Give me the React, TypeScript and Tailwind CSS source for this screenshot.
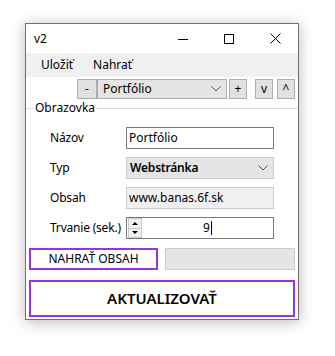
const font = { fontFamily: '"Noto Sans", "Segoe UI", sans-serif' };

const Chevron = () => (
  <svg className="ml-auto" width="10" height="6" viewBox="0 0 10 6" fill="none">
    <path d="M0.5 0.5 L5 5 L9.5 0.5" stroke="#555" strokeWidth="1" />
  </svg>
);

const FieldRow = ({ label, children }: { label: string; children: React.ReactNode }) => (
  <div className="flex h-[22px] items-center">
    <div className="w-[76px] pl-[24px] text-[12px] leading-none tracking-[-0.2px] text-black whitespace-nowrap">{label}</div>
    <div className="ml-[24px] w-[148px]">{children}</div>
  </div>
);

const ToolBtn = ({ children, className = '' }: { children: React.ReactNode; className?: string }) => (
  <button
    type="button"
    className={`flex h-[20px] items-center justify-center border border-[#adadad] bg-[#e1e1e1] text-[12px] leading-none text-black ${className}`}>
    {children}
  </button>
);

export default function App() {
  return (
    <div className="h-[356px] w-[335px] bg-white pl-[25px] pt-[23px]" style={font}>
      <div className="flex h-[297px] w-[274px] flex-col border border-[#707070] bg-white shadow-[0_2px_14px_rgba(0,0,0,0.28)]">
        {/* title bar */}
        <div className="flex h-[29px] items-center">
          <span className="pl-[8px] text-[12px] text-black">v2</span>
          <div className="ml-auto flex h-full">
            <div className="flex w-[46px] items-center justify-center">
              <svg width="10" height="10" viewBox="0 0 10 10">
                <path d="M0 5.5 H10" stroke="#000" strokeWidth="1" />
              </svg>
            </div>
            <div className="flex w-[46px] items-center justify-center">
              <svg width="10" height="10" viewBox="0 0 10 10" fill="none">
                <rect x="0.5" y="0.5" width="9" height="9" stroke="#000" strokeWidth="1" />
              </svg>
            </div>
            <div className="flex w-[46px] items-center justify-center">
              <svg width="11" height="11" viewBox="0 0 11 11" fill="none">
                <path d="M0.5 0.5 L10.5 10.5 M10.5 0.5 L0.5 10.5" stroke="#000" strokeWidth="1" />
              </svg>
            </div>
          </div>
        </div>

        {/* menu */}
        <div className="flex h-[24px] items-center gap-[20px] bg-[#f0f0f0] pl-[15px] text-[12px] text-black">
          <span>Uložiť</span>
          <span>Nahrať</span>
        </div>

        {/* toolbar */}
        <div className="flex h-[23px] items-center pl-[51px]">
          <ToolBtn className="w-[20px]">-</ToolBtn>
          <div className="flex h-[20px] w-[130px] items-center border border-[#adadad] bg-[#e5e5e5] pl-[5px] pr-[5px] text-[12px] text-black">
            <span>Portfólio</span>
            <Chevron />
          </div>
          <ToolBtn className="ml-[2px] w-[18px]">+</ToolBtn>
          <ToolBtn className="ml-[8px] w-[18px] text-[11px]">v</ToolBtn>
          <ToolBtn className="ml-[4px] w-[18px] text-[11px]">^</ToolBtn>
        </div>

        {/* group */}
        <div className="mt-[1px] flex items-center">
          <div className="h-px w-[8px] bg-[#dcdcdc]" />
          <span className="px-px text-[12px] leading-[14px] text-black">Obrazovka</span>
          <div className="h-px flex-1 bg-[#dcdcdc]" />
        </div>

        <div className="mt-[12px] flex flex-col gap-[8px]">
          <FieldRow label="Názov">
            <div className="flex h-[22px] items-center border border-[#7a7a7a] bg-white pl-[2px] text-[12px] text-black">
              Portfólio
            </div>
          </FieldRow>
          <FieldRow label="Typ">
            <div className="flex h-[22px] items-center border border-[#cccccc] bg-[#e5e5e5] pl-[3px] pr-[5px] text-[12px] font-semibold tracking-[-0.2px] text-black">
              <span>Webstránka</span>
              <Chevron />
            </div>
          </FieldRow>
          <FieldRow label="Obsah">
            <div className="flex h-[22px] items-center border border-[#cccccc] bg-[#f0f0f0] pl-[2px] text-[12px] text-black">
              www.banas.6f.sk
            </div>
          </FieldRow>
          <FieldRow label="Trvanie (sek.)">
            <div className="flex h-[22px] items-center border border-[#7a7a7a] bg-white text-[12px] text-black">
              <div className="ml-px flex h-[20px] w-[14px] flex-col border border-[#c8c8c8] bg-[#f0f0f0]">
                <div className="flex flex-1 items-center justify-center border-b border-[#c8c8c8]">
                  <div className="h-0 w-0 border-x-[3px] border-b-[3px] border-x-transparent border-b-black" />
                </div>
                <div className="flex flex-1 items-center justify-center">
                  <div className="h-0 w-0 border-x-[3px] border-t-[3px] border-x-transparent border-t-black" />
                </div>
              </div>
              <div className="flex flex-1 items-center justify-center">
                <span>9</span>
                <span className="ml-px h-[14px] w-px bg-black" />
              </div>
            </div>
          </FieldRow>
        </div>

        <div className="mt-[9px] flex gap-[7px] pl-[3px]">
          <button
            type="button"
            className="flex h-[22px] w-[129px] items-center justify-center border-2 border-[#9933dd] bg-white text-[12px] text-black">
            NAHRAŤ OBSAH
          </button>
          <div className="h-[22px] w-[130px] border border-[#cccccc] bg-[#e5e5e5]" />
        </div>

        <button
          type="button"
          className="ml-[3px] mt-[10px] flex h-[37px] w-[266px] items-center justify-center border-2 border-[#9933dd] bg-white text-[15px] font-semibold text-black">
          AKTUALIZOVAŤ
        </button>
      </div>
    </div>
  );
}
